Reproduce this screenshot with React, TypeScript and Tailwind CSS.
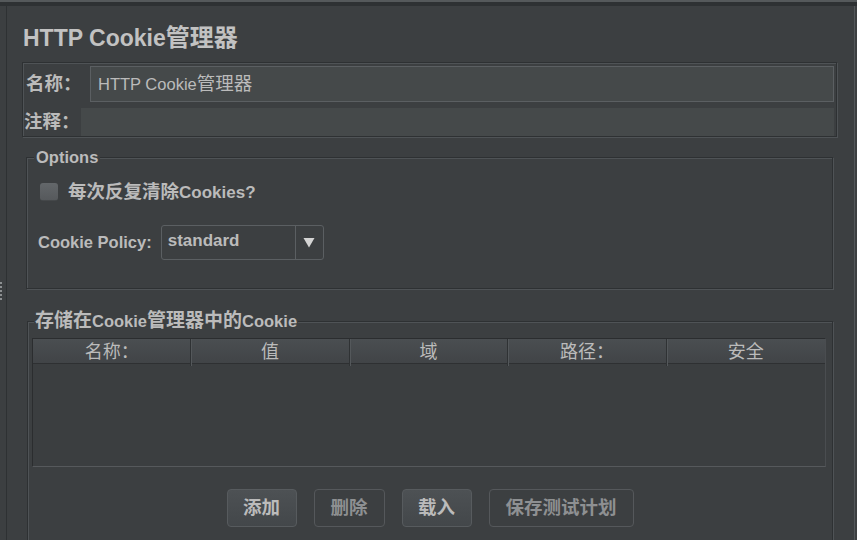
import React from "react";

const CJK_RE = /([\u3000-\u303f\u3400-\u9fff\uff00-\uffef]+)/;

function Mixed({ text, cjk }: { text: string; cjk: string }) {
  const parts = text.split(CJK_RE).filter((p) => p.length > 0);
  return (
    <>
      {parts.map((p, i) =>
        CJK_RE.test(p) ? (
          <span key={i} className={cjk}>
            {p}
          </span>
        ) : (
          <span key={i}>{p}</span>
        )
      )}
    </>
  );
}

const etched =
  "border border-[#2e3133] shadow-[1px_1px_0_#4f5356,inset_1px_1px_0_#4f5356]";

function Btn({ label, enabled, w }: { label: string; enabled: boolean; w: string }) {
  return (
    <div
      className={
        enabled
          ? `${w} h-[38px] rounded-[4px] border border-[#575b5e] bg-gradient-to-b from-[#4d5154] to-[#43474a] flex items-center justify-center text-[18.5px] font-bold text-[#bbbbbb] leading-none`
          : `${w} h-[38px] rounded-[4px] border border-[#55585b] bg-[#3c3f41] flex items-center justify-center text-[18.5px] font-bold text-[#8e9092] leading-none`
      }
    >
      {label}
    </div>
  );
}

export default function App() {
  const cols = ["名称：", "值", "域", "路径：", "安全"];
  return (
    <div className="w-[857px] h-[540px] overflow-hidden bg-[#3c3f41] flex flex-col font-['Liberation_Sans','Noto_Sans_CJK_SC',sans-serif] text-[#bbbbbb]">
      <div className="h-[2px] shrink-0 bg-[#55595b]" />
      <div className="h-[4px] shrink-0 bg-[#2e3133]" />
      <div className="flex flex-1 min-h-0">
        {/* splitter gutter */}
        <div className="w-[6px] shrink-0 pt-[276px] flex flex-col gap-[2px]">
          <div className="w-[2px] h-[2px] bg-[#8d9092]" />
          <div className="w-[2px] h-[2px] bg-[#8d9092]" />
          <div className="w-[2px] h-[2px] bg-[#8d9092]" />
          <div className="w-[2px] h-[2px] bg-[#8d9092]" />
          <div className="w-[2px] h-[2px] bg-[#8d9092]" />
        </div>
        <div className="w-[1px] shrink-0 bg-[#2e3133]" />

        {/* main panel */}
        <div className="w-[847px] shrink-0 flex flex-col">
          <div className="pt-[20px] pl-[16px] h-[44px] leading-[24px] text-[23px] font-bold text-[#c2c2c2]">
            <Mixed text="HTTP Cookie管理器" cjk="text-[24px]" />
          </div>

          {/* name / comment box */}
          <div className={`mt-[12px] ml-[15px] w-[815px] h-[75px] pt-[3px] flex flex-col ${etched}`}>
            <div className="flex h-[36px]">
              <div className="w-[67px] pl-[3px] flex items-center font-bold text-[18.5px]">名称：</div>
              <div className="w-[744px] border border-[#5b5f62] bg-[#45494a] flex items-center pl-[7px] text-[16.5px] text-[#bbbbbb]">
                <Mixed text="HTTP Cookie管理器" cjk="text-[18.5px]" />
              </div>
            </div>
            <div className="h-[6px]" />
            <div className="flex h-[28px]">
              <div className="w-[58px] pl-[1px] flex items-center font-bold text-[18.5px]">注释：</div>
              <div className="w-[753px] bg-[#45494a]" />
            </div>
          </div>

          {/* Options */}
          <div className={`relative mt-[20px] ml-[19px] w-[807px] h-[132px] shrink-0 ${etched}`}>
            <span className="absolute left-[7px] top-[-10px] px-[2px] bg-[#3c3f41] leading-[18px] text-[16.5px] font-bold">
              Options
            </span>
            <div className="pl-[13px] pt-[25px] flex items-center h-[43px]">
              <div className="w-[18px] h-[18px] rounded-[3px] bg-gradient-to-b from-[#63676a] to-[#56595c] border-b border-[#45484a]" />
              <div className="ml-[10px] font-bold text-[17px] leading-none">
                <Mixed text="每次反复清除Cookies?" cjk="text-[18.5px]" />
              </div>
            </div>
            <div className="pl-[11px] mt-[24px] flex items-center">
              <div className="text-[16.5px] font-bold">Cookie Policy:</div>
              <div className="ml-[9px] w-[163px] h-[35px] rounded-[3px] border border-[#5b5f62] flex">
                <div className="w-[133px] pl-[6px] pb-[3px] flex items-center text-[17px] font-bold">standard</div>
                <div className="w-[1px] bg-[#5b5f62]" />
                <div className="flex-1 flex items-center justify-center">
                  <svg width="12" height="11" viewBox="0 0 12 11">
                    <path d="M0.5 1 L11.5 1 L6 10.5 Z" fill="#d4d4d4" />
                  </svg>
                </div>
              </div>
            </div>
          </div>

          {/* Cookie store */}
          <div className={`relative mt-[32px] ml-[20px] w-[806px] h-[260px] shrink-0 ${etched}`}>
            <span className="absolute left-[6px] top-[-10px] px-[1px] bg-[#3c3f41] leading-[18px] text-[16.5px] font-bold">
              <Mixed text="存储在Cookie管理器中的Cookie" cjk="text-[19px]" />
            </span>
            <div className="pl-[4px] pt-[16px]">
              <div className="w-[794px] border-t border-l border-[#2b2d2f] border-b border-b-[#56595c] border-r border-r-[#4a4d50]">
                <div className="grid grid-cols-5 h-[25px] bg-gradient-to-b from-[#4a4e51] to-[#414447] border-b border-[#2e3032]">
                  {cols.map((c, i) => (
                    <div
                      key={c}
                      className={
                        i < 4
                          ? "flex items-center justify-center text-[18px] text-[#bbbbbb] border-r border-[#2f3234] shadow-[1px_0_0_#54585b]"
                          : "flex items-center justify-center text-[18px] text-[#bbbbbb]"
                      }
                    >
                      {c}
                    </div>
                  ))}
                </div>
                <div className="h-[102px] bg-[#3b3e40]" />
              </div>
              <div className="mt-[22px] flex justify-center gap-[17px] pr-[4px]">
                <Btn label="添加" enabled w="w-[70px]" />
                <Btn label="删除" enabled={false} w="w-[71px]" />
                <Btn label="载入" enabled w="w-[70px]" />
                <Btn label="保存测试计划" enabled={false} w="w-[145px]" />
              </div>
            </div>
          </div>
        </div>

        <div className="w-[1px] shrink-0 bg-[#53575a]" />
        <div className="w-[2px] shrink-0" />
      </div>
    </div>
  );
}
